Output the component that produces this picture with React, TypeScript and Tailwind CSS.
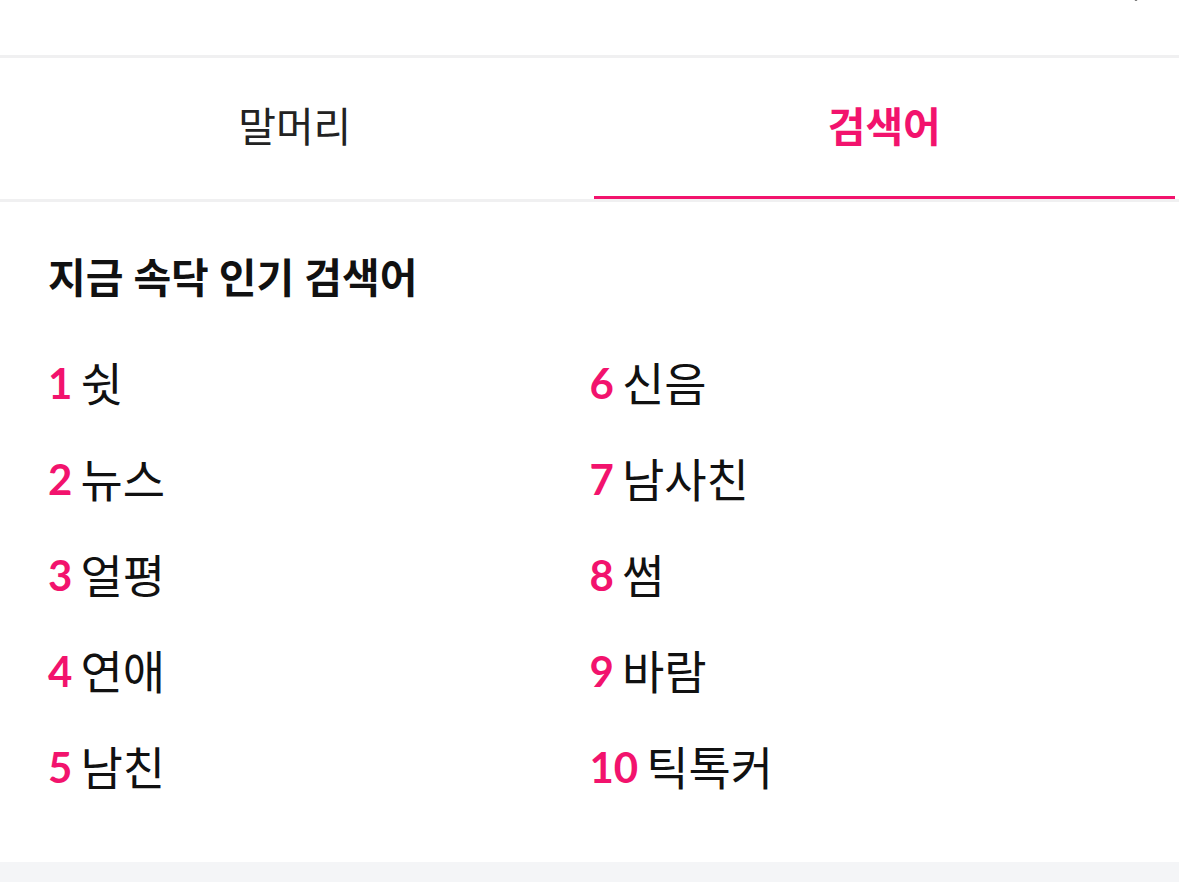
import React, { useState } from 'react';

const PINK = 'text-[#f2136d]';

const leftItems = ['쉿', '뉴스', '얼평', '연애', '남친'];
const rightItems = ['신음', '남사친', '썸', '바람', '틱톡커'];

const App: React.FC = () => {
  const [tab, setTab] = useState<'prefix' | 'search'>('search');
  const keywords = [...leftItems, ...rightItems];

  return (
    <div
      className="w-[1179px] h-[882px] bg-white overflow-hidden flex flex-col"
      style={{ fontFamily: 'Lato, "Noto Sans CJK KR", sans-serif' }}
    >
      {/* Header (scrolled mostly out of view) */}
      <div className="h-[55px] flex justify-end items-start overflow-hidden pr-[26px]">
        <svg width="26" height="26" viewBox="0 0 26 26" className="-mt-[21px]" fill="none">
          <path d="M2 14 L9 20 L16 14" stroke="#111" strokeWidth="3.5" strokeLinecap="round" strokeLinejoin="round" />
        </svg>
      </div>
      <div className="h-[3px] bg-[#f0f0f1]" />

      {/* Tabs */}
      <div className="flex h-[141px]">
        <button
          type="button"
          onClick={() => setTab('prefix')}
          className="flex-1 flex flex-col"
        >
          <span
            className={`flex-1 flex items-center justify-center text-[41px] ${
              tab === 'prefix' ? `${PINK} font-bold` : 'text-[#222]'
            }`}
          >
            말머리
          </span>
          <span className={`h-[3px] mx-1 ${tab === 'prefix' ? 'bg-[#f2136d]' : ''}`} />
        </button>
        <button
          type="button"
          onClick={() => setTab('search')}
          className="flex-1 flex flex-col"
        >
          <span
            className={`flex-1 flex items-center justify-center text-[41px] ${
              tab === 'search' ? `${PINK} font-bold` : 'text-[#222]'
            }`}
          >
            검색어
          </span>
          <span className={`h-[3px] ml-1 mr-[4px] ${tab === 'search' ? 'bg-[#f2136d]' : ''}`} />
        </button>
      </div>
      <div className="h-[3px] bg-[#f0f0f1]" />

      {/* Popular keywords */}
      <div className="px-12 pt-[52px] pb-[47px]">
        <h2 className="text-[41px] leading-[48px] font-bold text-[#111]">지금 속닥 인기 검색어</h2>
        <ol className="mt-[33px] grid grid-cols-2 grid-rows-5 grid-flow-col">
          {keywords.map((word, i) => (
            <li key={word} className="h-[96px] flex items-center gap-[8px]">
              <span className={`${PINK} font-bold text-[42px]`}>{i + 1}</span>
              <span className="text-[46px] text-[#111]">{word}</span>
            </li>
          ))}
        </ol>
      </div>

      <div className="flex-1 bg-[#f4f5f7]" />
    </div>
  );
};

export default App;
